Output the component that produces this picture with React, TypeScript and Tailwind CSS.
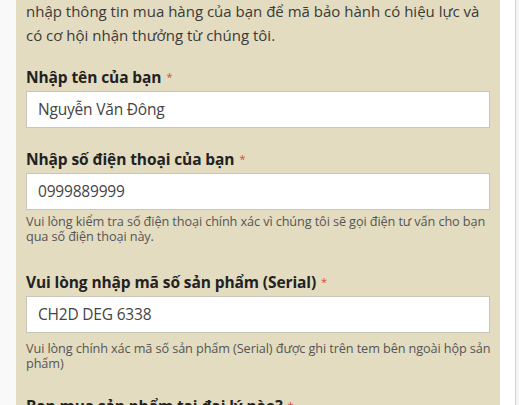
const Star = () => <span className="text-[#e0473a] font-normal text-[11px] align-top ml-[5px]">*</span>;

const Field = ({ label, value, help, helpGap }: { label: string; value: string; help?: string[]; helpGap?: string }) => {
    return (
        <div className="flex flex-col">
            <label className="font-bold text-[15.5px] leading-[22px] text-[#222] tracking-[-0.1px]">
                {label}
                <Star />
            </label>
            <div className="mt-[3px] h-[37px] bg-white border border-[#c9c5b8] flex items-center px-[11px] text-[15.5px] text-[#444] tracking-[-0.2px]">
                {value}
            </div>
            {help && (
                <p className={`${helpGap ?? "mt-[4px]"} text-[12.7px] leading-[15px] text-[#555] whitespace-nowrap tracking-[-0.1px]`}>
                    {help.map((l, i) => (
                        <span key={i} className="block">{l}</span>
                    ))}
                </p>
            )}
        </div>
    );
};

export default function App() {
    return (
        <div className="flex w-[519px] h-[405px] overflow-hidden" style={{ fontFamily: '"Open Sans", "Noto Sans", sans-serif' }}>
            <div className="w-[16px] bg-[#f9f9f9]" />
            <div className="w-[484px] bg-[#e3dcc0] px-[10px] text-[#333]">
                <p className="text-[15px] leading-[24px] text-[#3a3a3a] -mt-px whitespace-nowrap">
                    nhập thông tin mua hàng của bạn để mã bảo hành có hiệu lực và
                    <br />
                    có cơ hội nhận thưởng từ chúng tôi.
                </p>
                <div className="mt-[19px]">
                    <Field label="Nhập tên của bạn" value="Nguyễn Văn Đông" />
                </div>
                <div className="mt-[20px]">
                    <Field
                        label="Nhập số điện thoại của bạn"
                        value="0999889999"
                        help={["Vui lòng kiểm tra số điện thoại chính xác vì chúng tôi sẽ gọi điện tư vấn cho bạn", "qua số điện thoại này."]}
                    />
                </div>
                <div className="mt-[27px]">
                    <Field
                        label="Vui lòng nhập mã số sản phẩm (Serial)"
                        value="CH2D DEG 6338"
                        helpGap="mt-[8px]"
                        help={["Vui lòng chính xác mã số sản phẩm (Serial) được ghi trên tem bên ngoài hộp sản", "phẩm)"]}
                    />
                </div>
                <label className="block mt-[24px] font-bold text-[15.5px] leading-[22px] text-[#222] tracking-[-0.1px]">
                    Bạn mua sản phẩm tại đại lý nào?
                    <Star />
                </label>
            </div>
            <div className="w-[15px] bg-white" />
            <div className="w-px bg-[#d4d4d4]" />
            <div className="flex-1 bg-[#f3f3f3]" />
        </div>
    );
}
